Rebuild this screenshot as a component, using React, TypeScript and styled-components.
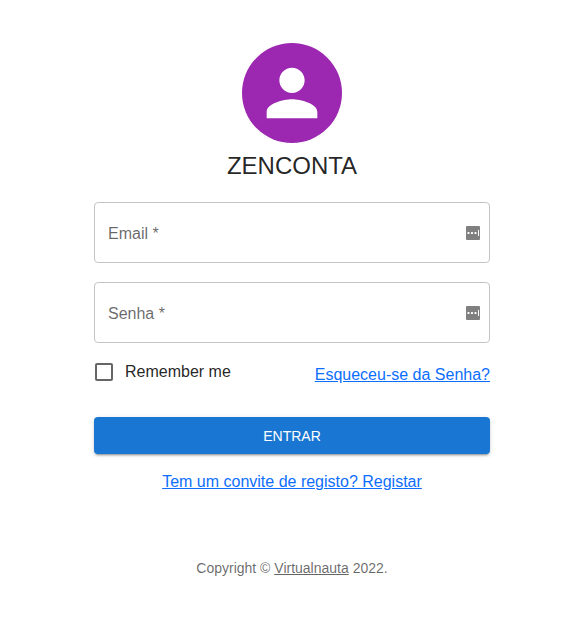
import React from "react";
import styled, { createGlobalStyle } from "styled-components";

const GlobalStyle = createGlobalStyle`
  *, *::before, *::after { box-sizing: border-box; }
  body {
    margin: 0;
    background: #fff;
    color: rgba(0, 0, 0, 0.87);
    font-family: "Liberation Sans", Arial, sans-serif;
    font-size: 16px;
    line-height: 24px;
  }
`;

const Page = styled.main`
  display: flex;
  flex-direction: column;
  align-items: center;
  padding: 43px 76px 38px 94px;
`;

const Avatar = styled.div`
  display: flex;
  align-items: center;
  justify-content: center;
  width: 100px;
  height: 100px;
  border-radius: 50%;
  background: #9c27b0;
  color: #fff;
`;

const Title = styled.h1`
  margin: 7px 0 0;
  font-size: 24px;
  font-weight: 400;
  line-height: 32px;
`;

const Form = styled.form`
  display: flex;
  flex-direction: column;
  width: 100%;
  max-width: 396px;
  margin-top: 20px;
`;

const Field = styled.label`
  display: flex;
  align-items: center;
  gap: 8px;
  padding: 18px 9px 17px 13px;
  margin-bottom: 19px;
  border: 1px solid #c4c4c4;
  border-radius: 4px;
  cursor: text;

  &:focus-within { border-color: #1976d2; }
`;

const FieldLabel = styled.span`
  padding-top: 2px;
  color: rgba(0, 0, 0, 0.6);
  line-height: 22px;
`;

const FieldInput = styled.input`
  flex: 1;
  min-width: 0;
  height: 24px;
  padding: 0;
  border: 0;
  outline: 0;
  background: transparent;
  font: inherit;
`;

const Options = styled.div`
  display: flex;
  align-items: flex-start;
  justify-content: space-between;
  padding-top: 1px;
`;

const Remember = styled.label`
  display: flex;
  align-items: center;
  gap: 12px;
  margin-top: -3px;
  padding-left: 1px;
`;

const Checkbox = styled.input`
  appearance: none;
  width: 18px;
  height: 18px;
  margin: 0;
  border: 2px solid #666;
  border-radius: 2px;

  &:checked {
    border-color: #1976d2;
    background: #1976d2;
  }
`;

const Link = styled.a`
  color: #0d6efd;
  text-decoration: underline;
`;

const SubmitButton = styled.button`
  height: 37px;
  margin: 30px 0 16px;
  border: 0;
  border-radius: 4px;
  background: #1976d2;
  color: #fff;
  font: inherit;
  font-size: 14px;
  text-transform: uppercase;
  cursor: pointer;
  box-shadow:
    0 3px 1px -2px rgba(0, 0, 0, 0.2),
    0 2px 2px 0 rgba(0, 0, 0, 0.14),
    0 1px 5px 0 rgba(0, 0, 0, 0.12);
`;

const Register = styled.div`
  text-align: center;
`;

const Footer = styled.footer`
  margin-top: 64px;
  color: rgba(0, 0, 0, 0.6);
  font-size: 14px;
  line-height: 20px;
  text-align: center;
`;

const FooterLink = styled.a`
  color: inherit;
`;

function PersonIcon() {
  return (
    <svg width="76" height="76" viewBox="0 0 24 24" fill="currentColor" aria-hidden="true">
      <path d="M12 12c2.21 0 4-1.79 4-4s-1.79-4-4-4-4 1.79-4 4 1.79 4 4 4zm0 2c-2.67 0-8 1.34-8 4v2h16v-2c0-2.66-5.33-4-8-4z" />
    </svg>
  );
}

function AutofillIcon() {
  return (
    <svg width="14" height="14" viewBox="0 0 14 14" aria-hidden="true">
      <rect width="14" height="14" rx="1" fill="#808080" />
      <rect x="1.5" y="6" width="2" height="2" rx="0.5" fill="#fff" />
      <rect x="5" y="6" width="2" height="2" rx="0.5" fill="#fff" />
      <rect x="8.5" y="6" width="2" height="2" rx="0.5" fill="#fff" />
      <rect x="12" y="4" width="1" height="6" fill="#fff" />
    </svg>
  );
}

type TextFieldProps = { label: string; type: string; name: string };

function TextField({ label, type, name }: TextFieldProps) {
  return (
    <Field>
      <FieldLabel>{label} *</FieldLabel>
      <FieldInput type={type} name={name} required />
      <AutofillIcon />
    </Field>
  );
}

export default function App() {
  return (
    <>
      <GlobalStyle />
      <Page>
        <Avatar><PersonIcon /></Avatar>
        <Title>ZENCONTA</Title>
        <Form onSubmit={(event) => event.preventDefault()}>
          <TextField label="Email" type="email" name="email" />
          <TextField label="Senha" type="password" name="password" />
          <Options>
            <Remember>
              <Checkbox type="checkbox" name="remember" />
              Remember me
            </Remember>
            <Link href="#recuperar">Esqueceu-se da Senha?</Link>
          </Options>
          <SubmitButton type="submit">Entrar</SubmitButton>
          <Register>
            <Link href="#registar">Tem um convite de registo? Registar</Link>
          </Register>
        </Form>
        <Footer>
          Copyright © <FooterLink href="#virtualnauta">Virtualnauta</FooterLink> 2022.
        </Footer>
      </Page>
    </>
  );
}
